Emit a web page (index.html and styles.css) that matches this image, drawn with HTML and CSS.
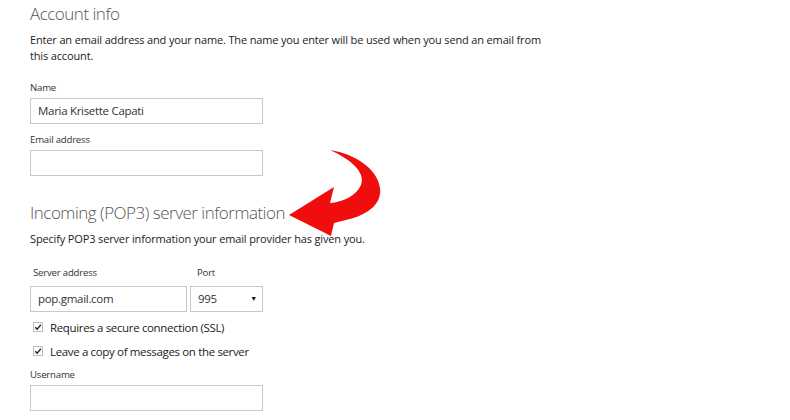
FILE: index.html
```html
<!DOCTYPE html>
<html lang="en">
<head>
  <meta charset="UTF-8">
  <title>Add account</title>
  <link rel="stylesheet" href="styles.css">
</head>
<body>
  <div class="account-form">
    <h1 class="section-title">Account info</h1>
    <p class="section-desc intro">Enter an email address and your name. The name you enter will be used when you send an email from this account.</p>

    <div class="field field-name">
      <div class="field-label">Name</div>
      <div class="text-box">Maria Krisette Capati</div>
    </div>
    <div class="field field-email">
      <div class="field-label">Email address</div>
      <div class="text-box"></div>
    </div>

    <h2 class="section-title incoming">Incoming (POP3) server information</h2>
    <p class="section-desc">Specify POP3 server information your email provider has given you.</p>

    <div class="server-row">
      <div class="field server-address">
        <div class="field-label">Server address</div>
        <div class="text-box">pop.gmail.com</div>
      </div>
      <div class="field server-port">
        <div class="field-label">Port</div>
        <div class="text-box select-box">995<span class="select-arrow">&#9660;</span></div>
      </div>
    </div>

    <div class="check-row first"><span class="check-box"><svg viewBox="0 0 10 10" width="10" height="10"><path d="M2.2 5.2 L4.2 7.3 L7.9 2.6" fill="none" stroke="#222" stroke-width="1.4"/></svg></span>Requires a secure connection (SSL)</div>
    <div class="check-row"><span class="check-box"><svg viewBox="0 0 10 10" width="10" height="10"><path d="M2.2 5.2 L4.2 7.3 L7.9 2.6" fill="none" stroke="#222" stroke-width="1.4"/></svg></span>Leave a copy of messages on the server</div>

    <div class="field field-username">
      <div class="field-label">Username</div>
      <div class="text-box"></div>
    </div>
  </div>

  <svg class="pointer-arrow" viewBox="280 140 110 105" width="110" height="105">
    <path d="M330 150 C356 154 378 170 380 188 C382 204 368 214 350 219 L334 223 L331 236 L289 215 L334 187 L330 203 C343 202 356 196 361 185 C366 172 350 159 330 150 Z" fill="#f00d0d"/>
  </svg>
</body>
</html>
```

FILE: styles.css
```css
html {
  background: #fff;
}
body {
  margin: 0;
  font-family: 'Open Sans', 'Liberation Sans', sans-serif;
  color: #222;
}
*,
*::before,
*::after {
  box-sizing: border-box;
}
.account-form {
  padding-left: 30px;
  width: 560px;
}
.section-title {
  margin: 0;
  font-size: 17px;
  font-weight: 300;
  line-height: 28px;
  color: #555;
  letter-spacing: -0.5px;
}
.section-title.incoming {
  margin-top: 23px;
}
.section-desc {
  margin: 4px 0 0;
  font-size: 11px;
  line-height: 16px;
  letter-spacing: -0.15px;
  color: #222;
}
.section-desc.intro {
  width: 520px;
}
.field {
  margin-top: 8px;
}
.field-name {
  margin-top: 16px;
}
.field-label {
  font-size: 9.6px;
  line-height: 16px;
  letter-spacing: -0.2px;
  color: #333;
  margin-bottom: 2px;
}
.text-box {
  width: 233px;
  height: 26px;
  padding: 0 7px;
  border: 1px solid #c8c8c8;
  font-size: 11.5px;
  line-height: 24px;
  letter-spacing: -0.3px;
  color: #333;
  background: #fff;
}

.server-row {
  display: flex;
  gap: 3px;
  margin-top: 18px;
}
.server-row .field {
  margin-top: 0;
}
.server-row .field-label {
  margin-bottom: 5px;
}
.server-address .field-label {
  padding-left: 3px;
}
.server-address .text-box {
  width: 157px;
}
.server-port .field-label {
  padding-left: 7px;
}
.select-box {
  position: relative;
  width: 73px;
}
.select-arrow {
  position: absolute;
  right: 5px;
  top: 0;
  font-size: 7px;
  color: #111;
}

.check-row {
  display: flex;
  align-items: center;
  height: 20px;
  margin-top: 4px;
  padding-left: 3px;
  font-size: 11.5px;
  letter-spacing: -0.35px;
  color: #222;
}
.check-row.first {
  margin-top: 5px;
}
.check-box {
  display: flex;
  width: 10px;
  height: 10px;
  margin-right: 7px;
  border: 1px solid #bdbdbd;
}
.check-box svg {
  margin: -1px;
}
.field-username {
  margin-top: 6px;
}

.pointer-arrow {
  position: absolute;
  left: 280px;
  top: 140px;
}
```
